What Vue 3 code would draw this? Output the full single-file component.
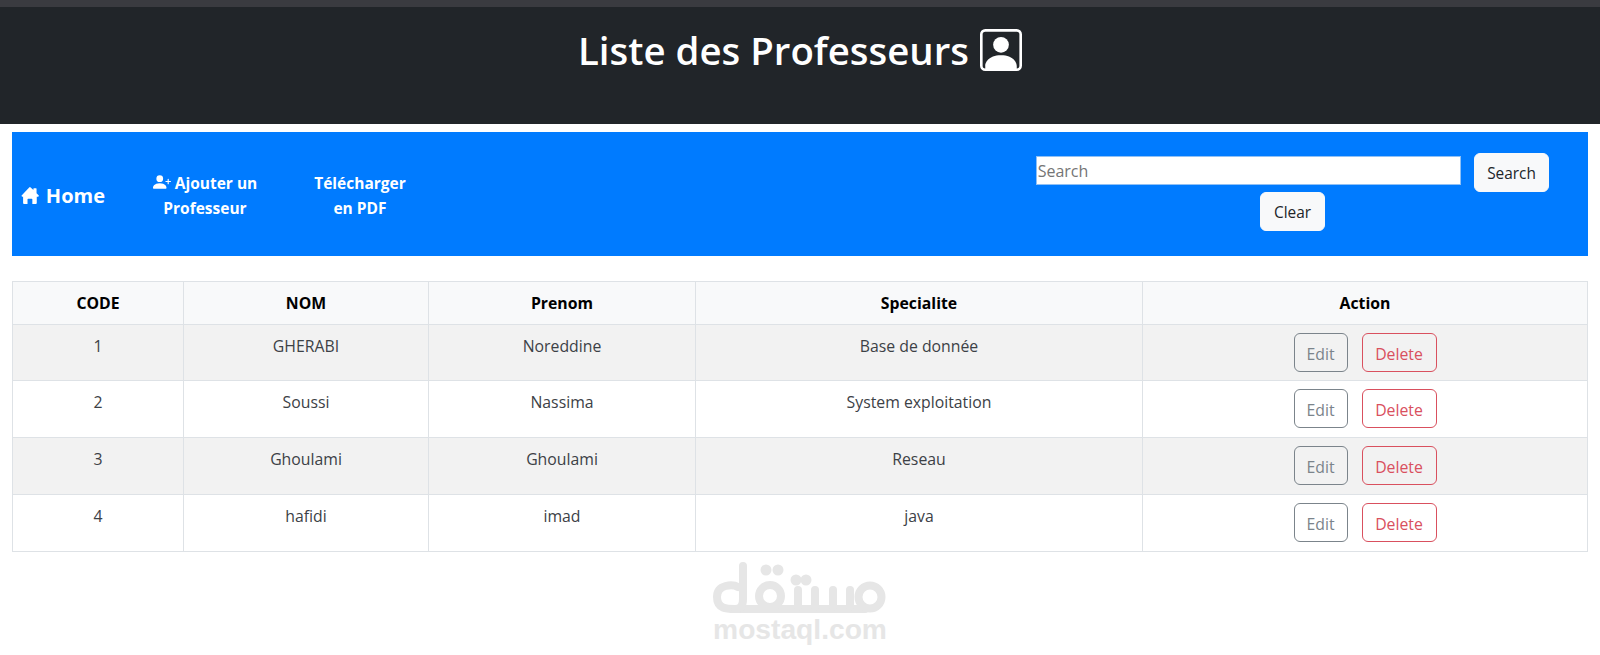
<script setup>
const rows = [
  { code: 1, nom: 'GHERABI', prenom: 'Noreddine', spec: 'Base de donnée' },
  { code: 2, nom: 'Soussi', prenom: 'Nassima', spec: 'System exploitation' },
  { code: 3, nom: 'Ghoulami', prenom: 'Ghoulami', spec: 'Reseau' },
  { code: 4, nom: 'hafidi', prenom: 'imad', spec: 'java' },
]
const cols = ['CODE', 'NOM', 'Prenom', 'Specialite', 'Action']
</script>

<template>
  <div class="page">
    <header class="top">
      <h1>
        Liste des Professeurs
        <svg class="title-icon" viewBox="0 0 16 16" fill="currentColor">
          <path d="M11 6a3 3 0 1 1-6 0 3 3 0 0 1 6 0z" />
          <path d="M2 0a2 2 0 0 0-2 2v12a2 2 0 0 0 2 2h12a2 2 0 0 0 2-2V2a2 2 0 0 0-2-2H2zm12 1a1 1 0 0 1 1 1v12a1 1 0 0 1-1 1v-1c0-1-1-4-6-4s-6 3-6 4v1a1 1 0 0 1-1-1V2a1 1 0 0 1 1-1h12z" />
        </svg>
      </h1>
    </header>

    <nav class="bar">
      <div class="links">
        <a class="home">
          <svg class="home-icon" viewBox="0 0 17 16" fill="currentColor">
            <path d="M7.8.3a1 1 0 0 1 1.4 0l2.6 2.4V1.5a.5.5 0 0 1 .5-.5h2a.5.5 0 0 1 .5.5v4.4l1.9 1.8a.8.8 0 0 1-.5 1.4H15v6a.9.9 0 0 1-.9.9h-3.3v-4.4a.6.6 0 0 0-.6-.6H6.800a.6.6 0 0 0-.6.6V16H2.900a.9.9 0 0 1-.9-.9v-6h-.7a.8.8 0 0 1-.5-1.400L7.800.3z" />
          </svg>
          Home
        </a>
        <a class="link add">
          <svg class="add-icon" viewBox="0 0 16 16" fill="currentColor">
            <path d="M1 14s-1 0-1-1 1-4 6-4 6 3 6 4-1 1-1 1H1zm5-6a3 3 0 1 0 0-6 3 3 0 0 0 0 6z" />
            <path fill-rule="evenodd" d="M13.5 5a.5.5 0 0 1 .5.5V7h1.5a.5.5 0 0 1 0 1H14v1.5a.5.5 0 0 1-1 0V8h-1.5a.5.5 0 0 1 0-1H13V5.5a.5.5 0 0 1 .5-.5z" />
          </svg>
          Ajouter un Professeur
        </a>
        <a class="link pdf">Télécharger en PDF</a>
      </div>
      <form class="search" @submit.prevent>
        <input type="text" placeholder="Search" />
        <button class="light" type="button">Search</button>
        <button class="light" type="button">Clear</button>
      </form>
    </nav>

    <table>
      <colgroup>
        <col class="c1" /><col class="c2" /><col class="c3" /><col class="c4" /><col />
      </colgroup>
      <thead>
        <tr>
          <th v-for="c in cols" :key="c">{{ c }}</th>
        </tr>
      </thead>
      <tbody>
        <tr v-for="r in rows" :key="r.code">
          <td>{{ r.code }}</td>
          <td>{{ r.nom }}</td>
          <td>{{ r.prenom }}</td>
          <td>{{ r.spec }}</td>
          <td class="actions">
            <button class="edit" type="button">Edit</button>
            <button class="del" type="button">Delete</button>
          </td>
        </tr>
      </tbody>
    </table>

    <div class="mark">
      <svg class="mark-logo" viewBox="0 0 190 60" fill="none" stroke="#e6e6e6" stroke-width="8" stroke-linecap="round" stroke-linejoin="round" role="img" aria-label="mostaql logo">
        <path d="M33 30 C28 27 12 27 12 40 C12 52 22 52 30 52 H160" />
        <path d="M38 9 V42 C38 48 36 52 30 52" />
        <circle cx="65" cy="39" r="11" />
        <path d="M93 33 V50 M110 33 V50 M128 33 V50 M145 33 V50" />
        <circle cx="165" cy="40" r="11.5" />
        <g fill="#e6e6e6" stroke="none">
          <circle cx="61" cy="13" r="5.5" /><circle cx="73" cy="13" r="5.5" />
          <circle cx="91" cy="23" r="5.5" /><circle cx="101" cy="23" r="5.5" />
        </g>
      </svg>
      <div class="mark-text">mostaql.com</div>
    </div>
  </div>
</template>

<style scoped>
.page {
  font-family: "Open Sans", "Noto Sans", sans-serif;
  font-size: 15.8px;
  color: #212529;
  height: 655px;
  overflow: hidden;
  background: #fff;
}
.top {
  height: 117px;
  border-top: 7px solid #3a3b40;
  background: #212529;
  color: #fff;
  text-align: center;
}
h1 {
  margin: 0;
  padding-top: 20px;
  font-size: 38.4px;
  line-height: 46px;
  font-weight: 600;
  display: flex;
  justify-content: center;
  align-items: center;
  gap: 11px;
}
.title-icon { width: 42px; height: 42px; }
.bar {
  margin: 8px 12px 25px;
  height: 124px;
  background: #007bff;
  display: flex;
  justify-content: space-between;
  align-items: center;
  padding: 0 38px 0 9px;
  box-sizing: border-box;
}
.links { display: flex; align-items: center; color: #fff; font-weight: 700; padding-top: 4px; }
.home { display: flex; align-items: center; gap: 7px; font-size: 20px; width: 84px; white-space: nowrap; margin-top: -2px; }
.home-icon { width: 18px; height: 17px; }
.link { text-align: center; font-size: 15.5px; line-height: 25.5px; }
.add { width: 114px; margin-left: 43px; }
.add-icon { width: 18px; height: 18px; vertical-align: -2px; }
.pdf { width: 96px; margin-left: 50px; }
.search {
  width: 515px;
  margin-top: -4px;
  display: flex;
  flex-wrap: wrap;
  justify-content: center;
  align-items: flex-start;
  column-gap: 13px;
}
input {
  width: 425px;
  height: 29px;
  margin-top: 3px;
  box-sizing: border-box;
  padding: 0 1px;
  border: 1px solid #8fc0f5;
  font: inherit;
  font-size: 16px;
  color: #757575;
}
input::placeholder { color: #757575; }
button {
  font: inherit;
  font-size: 15.4px;
  height: 39px;
  padding: 2px 12.5px 0;
  border-radius: 6px;
  background: transparent;
}
.light { background: #f8f9fa; border: 1px solid #f8f9fa; color: #212529; }
table {
  margin: 0 12px;
  width: 1576px;
  border-collapse: collapse;
  table-layout: fixed;
}
.c1 { width: 171px; }
.c2 { width: 245px; }
.c3 { width: 267px; }
.c4 { width: 447px; }
th, td {
  border: 1px solid #dee2e6;
  text-align: center;
  padding: 8px;
  line-height: 26px;
  vertical-align: top;
}
th { background: #f8f9fa; color: #000; font-weight: 700; height: 43px; box-sizing: border-box; }
td { height: 57px; box-sizing: border-box; color: #3c4146; }
tbody tr:first-child td { height: 56px; }
tbody tr:nth-child(odd) td { background: #f2f2f2; }
.actions button { margin: 0 7px; font-size: 15.8px; padding: 2px 0 0; }
.edit { border: 1px solid #7b848b; color: #7b848b; width: 54px; }
.del { border: 1px solid #d9505e; color: #d9505e; width: 75px; }
.mark {
  margin-top: 5px;
  display: flex;
  flex-direction: column;
  align-items: center;
}
.mark-logo { width: 190px; height: 60px; }
.mark-text {
  margin-top: -3px;
  font-family: "Liberation Sans", sans-serif;
  font-weight: 700;
  font-size: 28.2px;
  line-height: 30px;
  color: #e6e6e6;
}
</style>
